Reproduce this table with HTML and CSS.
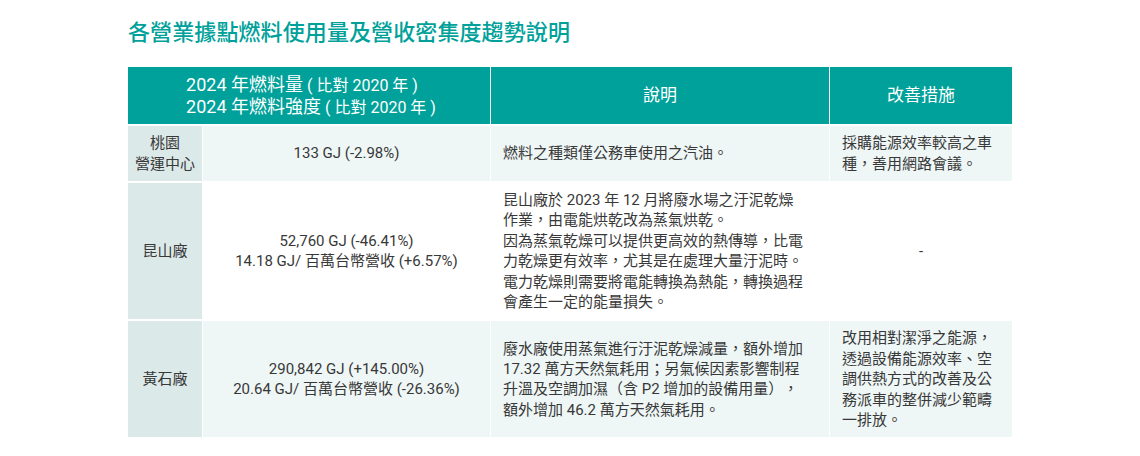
FILE: index.html
```html
<!DOCTYPE html>
<html lang="zh-Hant">
<head>
<meta charset="utf-8">
<title>各營業據點燃料使用量及營收密集度趨勢說明</title>
<link rel="stylesheet" href="styles.css">
</head>
<body>
<div class="page">
  <h1 class="title">各營業據點燃料使用量及營收密集度趨勢說明</h1>
  <table class="fuel">
    <colgroup>
      <col class="c-site">
      <col class="c-value">
      <col class="c-desc">
      <col class="c-act">
    </colgroup>
    <thead>
      <tr>
        <th colspan="2"><span class="hblock">2024 年燃料量<span class="sm"> ( 比對 2020 年 )</span><br>2024 年燃料強度<span class="sm"> ( 比對 2020 年 )</span></span></th>
        <th>說明</th>
        <th>改善措施</th>
      </tr>
    </thead>
    <tbody>
      <tr class="tint">
        <td class="site">桃園<br>營運中心</td>
        <td class="value">133 GJ (-2.98%)</td>
        <td class="desc">燃料之種類僅公務車使用之汽油。</td>
        <td class="act">採購能源效率較高之車<br>種，善用網路會議。</td>
      </tr>
      <tr class="plain">
        <td class="site">昆山廠</td>
        <td class="value">52,760 GJ (-46.41%)<br>14.18 GJ/ 百萬台幣營收 (+6.57%)</td>
        <td class="desc">昆山廠於 2023 年 12 月將廢水場之汙泥乾燥<br>作業，由電能烘乾改為蒸氣烘乾。<br>因為蒸氣乾燥可以提供更高效的熱傳導，比電<br>力乾燥更有效率，尤其是在處理大量汙泥時。<br>電力乾燥則需要將電能轉換為熱能，轉換過程<br>會產生一定的能量損失。</td>
        <td class="act center">-</td>
      </tr>
      <tr class="tint">
        <td class="site">黃石廠</td>
        <td class="value">290,842 GJ (+145.00%)<br>20.64 GJ/ 百萬台幣營收 (-26.36%)</td>
        <td class="desc">廢水廠使用蒸氣進行汙泥乾燥減量，額外增加<br>17.32 萬方天然氣耗用；另氣候因素影響制程<br>升溫及空調加濕（含 P2 增加的設備用量），<br>額外增加 46.2 萬方天然氣耗用。</td>
        <td class="act">改用相對潔淨之能源，<br>透過設備能源效率、空<br>調供熱方式的改善及公<br>務派車的整併減少範疇<br>一排放。</td>
      </tr>
    </tbody>
  </table>
</div>
</body>
</html>
```

FILE: styles.css
```css
* { box-sizing: border-box; }

html, body {
  margin: 0;
  padding: 0;
  background: #ffffff;
}

body {
  font-family: "Roboto", "Noto Sans CJK TC", sans-serif;
  color: #383838;
  text-spacing-trim: space-all;
}

.page {
  padding: 19px 0 0 127px;
}

.title {
  margin: 0 0 0 1px;
  font-size: 22px;
  line-height: 28px;
  font-weight: 500;
  color: #00a19a;
  letter-spacing: 0.1px;
}

.fuel {
  margin-top: 18px;
  border-collapse: separate;
  border-spacing: 1px 2px;
  table-layout: fixed;
  width: 886px;
}

.c-site { width: 74px; }
.c-value { width: 287px; }
.c-desc { width: 338px; }
.c-act { width: 182px; }

.fuel th {
  background: #00a19a;
  color: #ffffff;
  font-weight: 400;
  font-size: 17px;
  line-height: 21px;
  height: 57px;
  padding: 6px 8px;
  text-align: center;
  vertical-align: middle;
}

.hblock {
  display: inline-block;
  text-align: left;
  font-size: 18px;
  margin-left: 4px;
}

.sm {
  font-size: 16px;
}

.fuel td {
  font-size: 15px;
  line-height: 20.4px;
  padding: 7px 12px;
  vertical-align: middle;
}

.tint td { background: #eef6f6; }
.plain td { background: #ffffff; }

.fuel td.site {
  background: #dce9e9;
  text-align: center;
  padding: 5px 4px;
  line-height: 21px;
}

.value { text-align: center; }
.desc { text-align: left; }
.act { text-align: left; }
.act.center { text-align: center; }

.fuel tbody tr:nth-child(1) td { height: 55px; }
.fuel tbody tr:nth-child(2) td { height: 135px; }
.fuel tbody tr:nth-child(3) td { height: 116px; }
```
